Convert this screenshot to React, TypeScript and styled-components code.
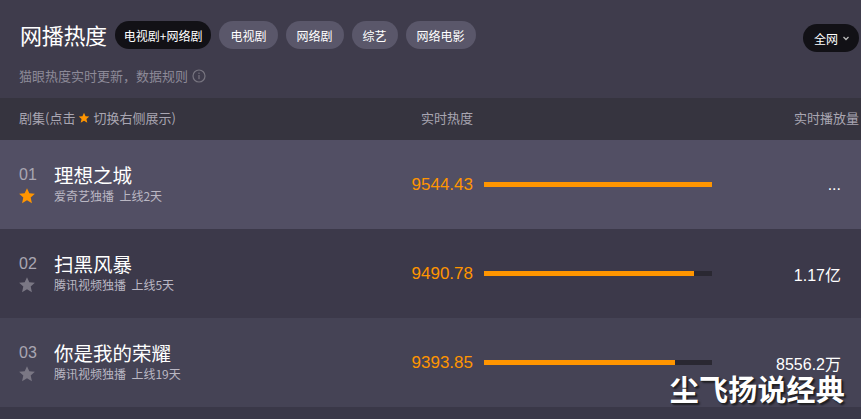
import React from "react";
import styled, { createGlobalStyle } from "styled-components";

const Global = createGlobalStyle`
  html, body { margin: 0; padding: 0; background: #3a3848; }
  body { font-family: "Liberation Sans", "Noto Sans CJK SC", sans-serif; }
  * { box-sizing: border-box; }
`;

const Page = styled.div`
  position: relative;
  width: 861px;
  height: 419px;
  overflow: hidden;
  background: #3a3848;
`;

const Top = styled.div`
  background: #3f3c4c;
  height: 98px;
  padding: 21px 2px 0 20px;
`;

const TopRow = styled.div`
  display: flex;
  align-items: flex-start;
`;

const Title = styled.h1`
  margin: 0;
  font-size: 22px;
  line-height: 26px;
  font-weight: 400;
  color: #fff;
  font-family: "Noto Sans CJK SC", sans-serif;
  letter-spacing: -0.3px;
`;

const Pills = styled.div`
  display: flex;
  gap: 8px;
  margin-left: 8px;
`;

const Pill = styled.div<{ $active?: boolean }>`
  height: 28px;
  border-radius: 14px;
  display: flex;
  align-items: center;
  font-size: 12px;
  font-family: "Noto Sans CJK SC", sans-serif;
  color: #fff;
  background: ${(p) => (p.$active ? "#121116" : "#5a576a")};
  padding: ${(p) => (p.$active ? "0 9px" : "0 11px")};
`;

const Region = styled.div`
  margin-left: auto;
  margin-top: 3px;
  height: 28px;
  padding: 0 9px 0 11px;
  border-radius: 14px;
  background: #121116;
  color: #fff;
  display: flex;
  align-items: center;
  gap: 4px;
  font-size: 12px;
  font-family: "Noto Sans CJK SC", sans-serif;
`;

const Sub = styled.div`
  margin-top: 15px;
  display: flex;
  align-items: center;
  gap: 4px;
  font-size: 13px;
  line-height: 18px;
  color: #8d8a98;
  font-family: "Noto Sans CJK SC", sans-serif;
  margin-left: -1px;
`;

const HeadRow = styled.div`
  display: grid;
  grid-template-columns: 1fr 228px 147px;
  align-items: center;
  height: 42px;
  padding: 0 2px 3px 19px;
  background: #36343f;
  color: #a9a6b2;
  font-size: 13px;
  font-family: "Noto Sans CJK SC", sans-serif;
`;

const HeadLeft = styled.div`
  display: flex;
  align-items: center;
`;

const HeadStar = styled.span`
  display: flex;
  margin: 0 3px;
`;

const HeadHeat = styled.div`
  margin-left: auto;
  margin-right: 11px;
`;

const HeadPlay = styled.div`
  grid-column: 3;
  text-align: right;
`;

const Row = styled.div<{ $bg: string }>`
  display: grid;
  grid-template-columns: 1fr 228px 129px;
  align-items: center;
  height: 89px;
  padding: 0 20px 0 19px;
  background: ${(p) => p.$bg};
`;

const Cell = styled.div`
  display: flex;
  align-items: center;
`;

const Info = styled.div`
  display: grid;
  grid-template-columns: 35px auto;
  grid-template-rows: 23px 20px;
  align-items: center;
`;

const Rank = styled.div`
  font-size: 16px;
  color: #a9a6b2;
  line-height: 23px;
`;

const Name = styled.div`
  font-size: 19.5px;
  color: #fff;
  font-family: "Noto Sans CJK SC", sans-serif;
  line-height: 23px;
`;

const Meta = styled.div`
  font-size: 12px;
  color: #bab7c3;
  font-family: "Noto Sans CJK SC", sans-serif;
  line-height: 20px;
  white-space: pre;
`;

const StarWrap = styled.div`
  display: flex;
  align-items: center;
  margin-left: -1px;
`;

const Heat = styled.div`
  margin-left: auto;
  margin-right: 11px;
  font-size: 17px;
  color: #ff9500;
`;

const Track = styled.div`
  height: 5px;
  background: #2a2832;
`;

const Fill = styled.div`
  height: 100%;
  background: #ff9500;
`;

const Play = styled.div`
  text-align: right;
  font-size: 16px;
  color: #fff;
`;

const Watermark = styled.div`
  position: absolute;
  right: 16px;
  bottom: 16px;
  font-size: 29px;
  font-weight: 700;
  color: #fff;
  font-family: "Noto Sans CJK SC", sans-serif;
  letter-spacing: 0.2px;
  text-shadow: 1px 1px 0 #222, 2px 2px 2px rgba(0,0,0,0.6);
  line-height: 1;
`;

const Star = ({ size, color }: { size: number; color: string }) => (
  <svg width={size} height={size} viewBox="0 0 24 24">
    <path
      d="M12 1.5l3.1 6.9 7.4.7-5.6 5 1.7 7.4L12 17.6l-6.6 3.9 1.7-7.4-5.6-5 7.4-.7z"
      fill={color}
    />
  </svg>
);

const rows = [
  { rank: "01", name: "理想之城", meta: "爱奇艺独播  上线2天", heat: "9544.43", pct: 1, play: "...", bg: "#524f64", star: "#ff9500" },
  { rank: "02", name: "扫黑风暴", meta: "腾讯视频独播  上线5天", heat: "9490.78", pct: 210 / 228, play: "1.17亿", bg: "#3c394a", star: "#7a7784" },
  { rank: "03", name: "你是我的荣耀", meta: "腾讯视频独播  上线19天", heat: "9393.85", pct: 191 / 228, play: "8556.2万", bg: "#454355", star: "#7a7784" },
];

export default function App() {
  return (
    <Page>
      <Global />
      <Top>
        <TopRow>
          <Title>网播热度</Title>
          <Pills>
            <Pill $active>电视剧+网络剧</Pill>
            <Pill>电视剧</Pill>
            <Pill>网络剧</Pill>
            <Pill>综艺</Pill>
            <Pill>网络电影</Pill>
          </Pills>
          <Region>
            全网
            <svg width="8" height="8" viewBox="0 0 8 8">
              <path d="M1.5 3l2.5 2.5L6.5 3" stroke="#bbb" strokeWidth="1.3" fill="none" />
            </svg>
          </Region>
        </TopRow>
        <Sub>
          猫眼热度实时更新，数据规则
          <svg width="14" height="14" viewBox="0 0 14 14">
            <circle cx="7" cy="7" r="6" stroke="#77747f" strokeWidth="1.2" fill="none" />
            <rect x="6.4" y="6" width="1.2" height="4.2" fill="#77747f" />
            <rect x="6.4" y="3.6" width="1.2" height="1.3" fill="#77747f" />
          </svg>
        </Sub>
      </Top>
      <HeadRow>
        <HeadLeft>
          剧集(点击
          <HeadStar>
            <Star size={12} color="#ff9500" />
          </HeadStar>
          切换右侧展示)
          <HeadHeat>实时热度</HeadHeat>
        </HeadLeft>
        <HeadPlay>实时播放量</HeadPlay>
      </HeadRow>
      {rows.map((r) => (
        <Row key={r.rank} $bg={r.bg}>
          <Cell>
            <Info>
              <Rank>{r.rank}</Rank>
              <Name>{r.name}</Name>
              <StarWrap>
                <Star size={18} color={r.star} />
              </StarWrap>
              <Meta>{r.meta}</Meta>
            </Info>
            <Heat>{r.heat}</Heat>
          </Cell>
          <Track>
            <Fill style={{ width: `${r.pct * 100}%` }} />
          </Track>
          <Play>{r.play}</Play>
        </Row>
      ))}
      <Watermark>尘飞扬说经典</Watermark>
    </Page>
  );
}
